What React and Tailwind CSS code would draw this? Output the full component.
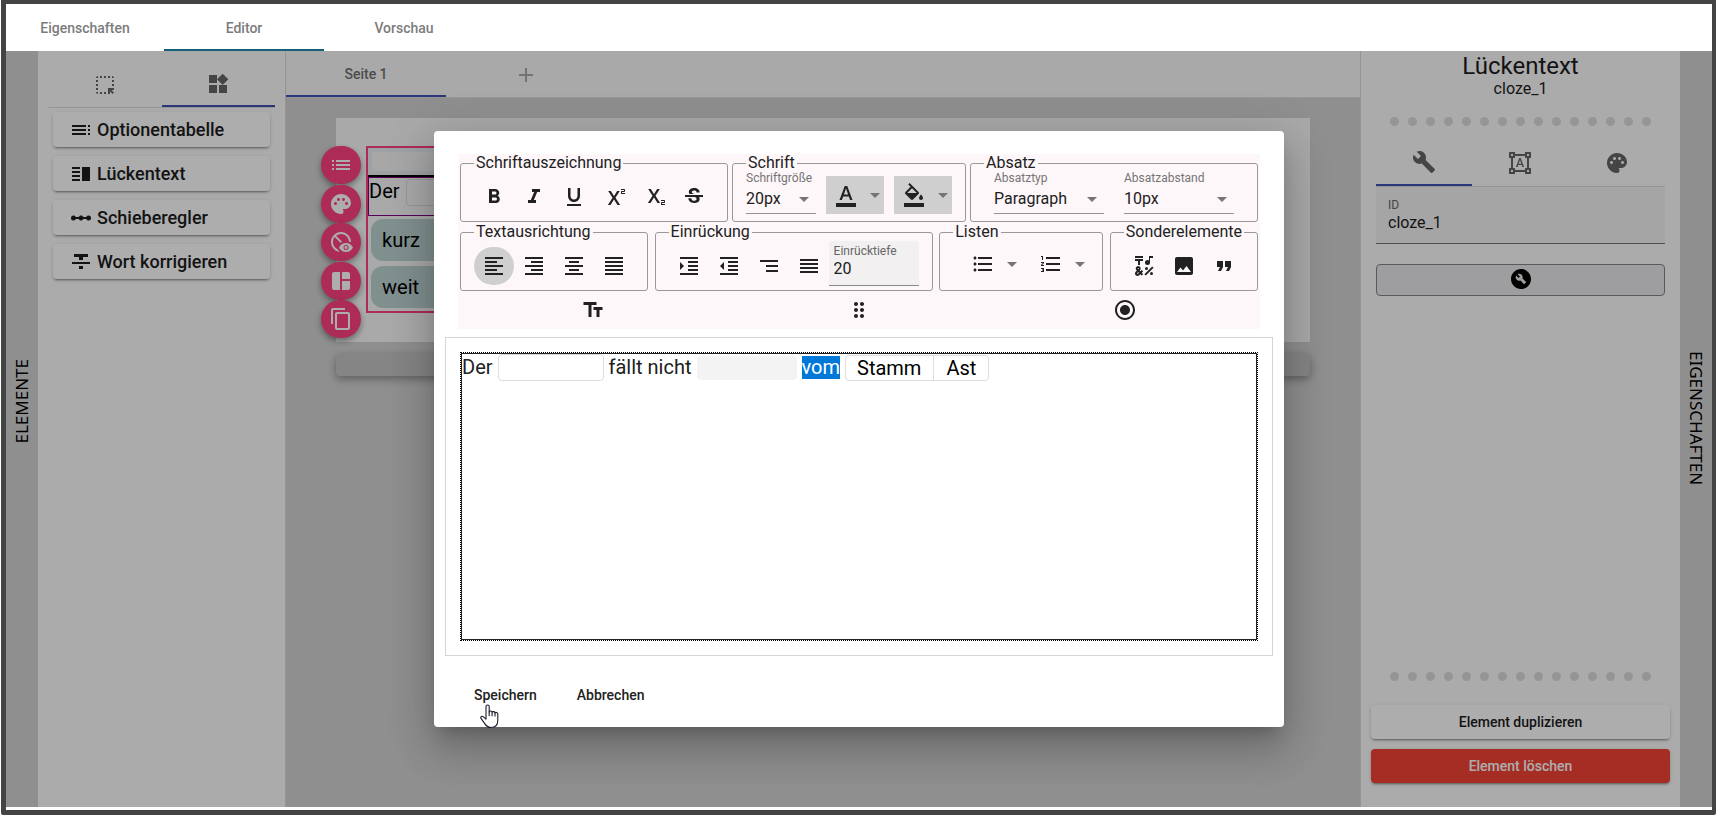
import React from 'react';
import {
  MdFormatBold, MdFormatItalic, MdFormatUnderlined, MdSuperscript, MdSubscript, MdStrikethroughS,
  MdFormatAlignLeft, MdFormatAlignRight, MdFormatAlignCenter, MdFormatAlignJustify,
  MdFormatIndentIncrease, MdFormatIndentDecrease, MdSegment, MdReorder,
  MdFormatListBulleted, MdFormatListNumbered, MdEmojiSymbols, MdImage, MdFormatQuote,
  MdTextFields, MdDragIndicator, MdRadioButtonChecked, MdPalette, MdBuild, MdFormatShapes,
  MdBuildCircle, MdWidgets, MdHighlightAlt, MdToc, MdVerticalSplit, MdLinearScale,
  MdFormatStrikethrough, MdContentCopy, MdList, MdDisabledVisible,
  MdFormatColorText, MdFormatColorFill, MdAdd, MdArrowDropDown,
} from 'react-icons/md';

const raised =
  'shadow-[0_3px_1px_-2px_rgba(0,0,0,0.2),0_2px_2px_0_rgba(0,0,0,0.14),0_1px_5px_0_rgba(0,0,0,0.12)]';

function LayoutIcon({ size }) {
  return (
    <svg viewBox="0 0 24 24" width={size} height={size} fill="currentColor">
      <path d="M11 21H5c-1.100 0-2-.9-2-2V5c0-1.100.9-2 2-2h6v18zM13 21h6c1.100 0 2-.9 2-2v-7h-8v9zM21 10V5c0-1.100-.9-2-2-2h-6v7h8z" />
    </svg>
  );
}

function Header() {
  const tabs = ['Eigenschaften', 'Editor', 'Vorschau'];
  return (
    <nav className="flex h-[47px] shrink-0 bg-white">
      {tabs.map((t) => (
        <button
          key={t}
          className={
            'flex w-40 items-center justify-center border-b-2 pt-[3px] text-sm font-medium text-[#7c7c7c] first:w-[158px] ' +
            (t === 'Editor' ? 'border-[#14607a]' : 'border-transparent')
          }
        >
          {t}
        </button>
      ))}
    </nav>
  );
}

function SideLabel({ children, flip }) {
  return (
    <div className="flex w-8 shrink-0 justify-center bg-[#d3d3d3] pt-[300px] font-['Noto_Sans',sans-serif] text-[17px] leading-6 text-black">
      <span className={'h-fit [writing-mode:vertical-rl] ' + (flip ? 'mt-2 rotate-180' : '')}>{children}</span>
    </div>
  );
}

function ElementPalette() {
  const items = [
    [MdToc, 'Optionentabelle'],
    [MdVerticalSplit, 'Lückentext'],
    [MdLinearScale, 'Schieberegler'],
    [MdFormatStrikethrough, 'Wort korrigieren'],
  ];
  return (
    <aside className="w-[248px] shrink-0 border-r border-[#dcdcdc] bg-[#fdfdfd] px-[10px] pt-[9px]">
      <div className="flex h-12 border-b border-[#dcdcdc] text-[#666]">
        <button aria-label="Auswahl" className="flex flex-1 items-center justify-center pt-[2px]">
          <MdHighlightAlt size={24} />
        </button>
        <button
          aria-label="Elemente"
          className="flex flex-1 items-center justify-center border-b-2 border-[#3f51b5] pt-[2px]"
        >
          <MdWidgets size={24} />
        </button>
      </div>
      <div className="flex flex-col gap-[9px] px-[5px] pt-1">
        {items.map(([Icon, label]) => (
          <button
            key={label}
            className={'flex h-[35px] items-center gap-1 rounded bg-white px-4 text-lg font-medium text-[#1c1c1c] ' + raised}
          >
            <Icon size={24} />
            {label}
          </button>
        ))}
      </div>
    </aside>
  );
}

function Canvas() {
  const tools = [MdList, MdPalette, MdDisabledVisible, LayoutIcon, MdContentCopy];
  const names = ['Liste', 'Farben', 'Sichtbarkeit', 'Layout', 'Kopieren'];
  return (
    <main className="flex min-w-0 flex-1 flex-col bg-[#d3d3d3]">
      <div className="flex h-[47px] shrink-0 border-b border-[#ddd] bg-[#fafafa] text-sm font-medium text-[#707070]">
        <button className="flex w-40 items-center justify-center border-b-2 border-[#3f51b5] pt-[2px]">Seite 1</button>
        <button aria-label="Seite hinzufügen" className="flex w-40 items-center justify-center pt-[2px] text-[#aaa]">
          <MdAdd size={24} />
        </button>
      </div>
      <div className="mx-[50px] mt-5">
        <section className="relative h-56 bg-[#fafafa] pt-7 pl-[30px]">
          <div className="absolute top-7 -left-[15px] flex h-48 flex-col justify-between">
            {tools.map((Icon, i) => (
              <button
                key={names[i]}
                aria-label={names[i]}
                className="flex h-[38px] w-10 items-center justify-center rounded-full bg-[#ff4081] text-white shadow-[0_3px_6px_rgba(0,0,0,0.4)]"
              >
                <Icon size={24} />
              </button>
            ))}
          </div>
          <div className="flex h-[167px] w-80 flex-col border-2 border-[#ff4081] text-xl text-black">
            <div className="h-[29px] border-b-2 border-black bg-[#e9eff4] px-1 py-1">
              <div className="h-full bg-[#f6f6f6]" />
            </div>
            <div className="flex h-[40px] gap-[6px] border border-[#800080] pt-[1px]">
              <span className="leading-6">Der</span>
              <input aria-label="Lücke 1" readOnly className="h-[27px] w-[106px] rounded border border-[#ddd]" />
            </div>
            <div className="flex flex-col gap-[5px] p-[3px]">
              <div className="flex h-[42px] items-center rounded-xl bg-[#bdd4d3] px-[11px]">kurz</div>
              <div className="flex h-[42px] items-center rounded-xl bg-[#bdd4d3] px-[11px]">weit</div>
            </div>
          </div>
        </section>
        <div className="mt-3 h-[22px] rounded bg-[#c4c4c4] shadow-[0_3px_8px_rgba(0,0,0,0.35)]" />
      </div>
    </main>
  );
}

function Dots() {
  return (
    <div className="flex justify-center gap-[9px]">
      {Array.from({ length: 15 }, (_, i) => (
        <span key={i} className="size-[9px] rounded-full bg-[#dcdcdc]" />
      ))}
    </div>
  );
}

function Properties() {
  return (
    <aside className="flex w-80 shrink-0 flex-col border-l border-[#dcdcdc] bg-[#fdfdfd] px-[10px] pb-6 text-[#1c1c1c]">
      <h2 className="pt-[2px] text-center text-2xl leading-[26px]">Lückentext</h2>
      <p className="mb-[18px] text-center text-base leading-5">cloze_1</p>
      <Dots />
      <div className="mt-[13px] flex flex-1 flex-col px-[5px]">
        <div className="flex h-12 border-b border-[#dcdcdc] text-[#666]">
          <button aria-label="Eigenschaften" className="flex flex-1 items-center justify-center border-b-2 border-[#3f51b5]">
            <MdBuild size={24} />
          </button>
          <button aria-label="Position" className="flex flex-1 items-center justify-center">
            <MdFormatShapes size={24} />
          </button>
          <button aria-label="Stil" className="flex flex-1 items-center justify-center">
            <MdPalette size={24} />
          </button>
        </div>
        <div className="flex h-[57px] flex-col justify-center border-b border-[#77777c] bg-[#f4f4f4] px-3">
          <label htmlFor="element-id" className="text-xs leading-4 text-[#666]">ID</label>
          <input id="element-id" defaultValue="cloze_1" className="w-full bg-transparent text-base leading-5" />
        </div>
        <button
          aria-label="Element bearbeiten"
          className="mt-5 flex h-8 items-center justify-center rounded border border-[#83838e] bg-[#e9e9ed] pb-[2px] text-black"
        >
          <MdBuildCircle size={24} />
        </button>
      </div>
      <Dots />
      <div className="mt-6 flex flex-col gap-[10px]">
        <button className={'h-[34px] rounded bg-white text-sm font-medium ' + raised}>Element duplizieren</button>
        <button className={'h-[34px] rounded bg-[#f44336] text-sm font-medium text-white ' + raised}>Element löschen</button>
      </div>
    </aside>
  );
}

function Group({ title, children, wide }) {
  return (
    <fieldset
      className={
        'h-[68px] min-w-0 rounded-[3px] border border-[#999] ' + (wide ? 'px-[23px]' : 'px-[13px]')
      }
    >
      <legend className={'px-[2px] text-base leading-[18px] ' + (wide ? '-ml-[10px]' : '')}>{title}</legend>
      <div className="flex h-[49px] items-center">{children}</div>
    </fieldset>
  );
}

function IconButton({ icon: Icon, label, active }) {
  return (
    <button
      aria-label={label}
      className={'flex h-[38px] w-10 items-center justify-center rounded-full ' + (active ? 'bg-[#cfcfcf]' : '')}
    >
      <Icon size={24} />
    </button>
  );
}

function Choice({ id, label, value, width }) {
  return (
    <div className={'relative h-[42px] self-start border-b border-[#949494] ' + width}>
      <label htmlFor={id} className="block text-xs leading-3 text-[#757575]">{label}</label>
      <select id={id} defaultValue={value} className="mt-[5px] block w-full appearance-none bg-transparent text-base leading-5">
        <option>{value}</option>
      </select>
      <MdArrowDropDown size={24} className="pointer-events-none absolute right-0 bottom-[2px] text-[#757575]" />
    </div>
  );
}

function ColourButton({ icon: Icon, label }) {
  return (
    <button aria-label={label} className="flex h-[38px] w-[58px] items-center bg-[#cfcfcf] pl-2">
      <Icon size={24} className="shrink-0" />
      <MdArrowDropDown size={24} className="ml-[5px] shrink-0 text-[#757575]" />
    </button>
  );
}

function ListButton({ icon: Icon, label }) {
  return (
    <button aria-label={label} className="flex h-[46px] w-[68px] items-center self-start pl-[18px]">
      <Icon size={24} className="shrink-0" />
      <MdArrowDropDown size={24} className="ml-[5px] shrink-0 text-[#757575]" />
    </button>
  );
}

function Toolbar() {
  return (
    <div className="h-[175px] bg-[#fdf7fa] px-[2px]">
      <div className="flex justify-between">
        <Group title="Schriftauszeichnung">
          <IconButton icon={MdFormatBold} label="Fett" />
          <IconButton icon={MdFormatItalic} label="Kursiv" />
          <IconButton icon={MdFormatUnderlined} label="Unterstrichen" />
          <IconButton icon={MdSuperscript} label="Hochgestellt" />
          <IconButton icon={MdSubscript} label="Tiefgestellt" />
          <IconButton icon={MdStrikethroughS} label="Durchgestrichen" />
        </Group>
        <Group title="Schrift">
          <div className="flex h-[46px] items-center gap-[10px] self-start">
            <Choice id="size" label="Schriftgröße" value="20px" width="w-[70px]" />
            <ColourButton icon={MdFormatColorText} label="Schriftfarbe" />
            <ColourButton icon={MdFormatColorFill} label="Hintergrundfarbe" />
          </div>
        </Group>
        <Group title="Absatz" wide>
          <div className="flex gap-5 self-start">
            <Choice id="kind" label="Absatztyp" value="Paragraph" width="w-[110px]" />
            <Choice id="spacing" label="Absatzabstand" value="10px" width="w-[110px]" />
          </div>
        </Group>
      </div>
      <div className="mt-[1px] flex justify-between">
        <Group title="Textausrichtung">
          <IconButton icon={MdFormatAlignLeft} label="Linksbündig" active />
          <IconButton icon={MdFormatAlignRight} label="Rechtsbündig" />
          <IconButton icon={MdFormatAlignCenter} label="Zentriert" />
          <IconButton icon={MdFormatAlignJustify} label="Blocksatz" />
        </Group>
        <Group title="Einrückung">
          <IconButton icon={MdFormatIndentIncrease} label="Einrücken" />
          <IconButton icon={MdFormatIndentDecrease} label="Ausrücken" />
          <IconButton icon={MdSegment} label="Hängend" />
          <IconButton icon={MdReorder} label="Zurücksetzen" />
          <div className="h-[45px] w-[90px] self-start rounded-t border-b border-[#8a8a8a] bg-[#f2f0f0] px-[5px] pt-[2px]">
            <label htmlFor="indent" className="block text-xs leading-4 text-[#666]">Einrücktiefe</label>
            <input id="indent" defaultValue="20" className="block w-full bg-transparent text-base leading-5" />
          </div>
        </Group>
        <Group title="Listen">
          <ListButton icon={MdFormatListBulleted} label="Aufzählung" />
          <ListButton icon={MdFormatListNumbered} label="Nummerierung" />
        </Group>
        <Group title="Sonderelemente">
          <IconButton icon={MdEmojiSymbols} label="Sonderzeichen" />
          <IconButton icon={MdImage} label="Bild" />
          <IconButton icon={MdFormatQuote} label="Zitat" />
        </Group>
      </div>
      <div className="flex h-[38px] items-center justify-around">
        <IconButton icon={MdTextFields} label="Eingabefeld" />
        <IconButton icon={MdDragIndicator} label="Ablagefeld" />
        <IconButton icon={MdRadioButtonChecked} label="Optionsfeld" />
      </div>
    </div>
  );
}

function HandCursor() {
  return (
    <svg viewBox="0 0 19 25" className="pointer-events-none absolute top-[27px] left-[22px] h-[25px] w-[19px]">
      <path
        d="M6 14V2.600C6 .4 9.200.4 9.200 2.600V8c.4-1.400 2.800-1.200 2.900.3.600-1.200 2.700-.8 2.900.6.700-.9 2.800-.5 2.800 1.300v6c0 4.500-2.400 7.300-6.800 7.300-3.500 0-5-1.700-6.600-4.400L1 14.400c-.9-1.900 1.100-2.800 2.400-1.600L6 15.200z"
        fill="#fff"
        stroke="#1c1c2a"
        strokeWidth="1.100"
        strokeLinejoin="round"
      />
      <path d="M9.200 7.500v4.500M12.100 8.200v4M15 9v3.500" fill="none" stroke="#1c1c2a" strokeWidth="1.100" />
    </svg>
  );
}

function Dialog() {
  return (
    <div
      role="dialog"
      aria-label="Text bearbeiten"
      className="w-[850px] rounded bg-white px-6 pt-[23px] pb-[14px] text-[#212121] shadow-[0_11px_15px_-7px_rgba(0,0,0,0.2),0_24px_38px_3px_rgba(0,0,0,0.14),0_9px_46px_8px_rgba(0,0,0,0.12)]"
    >
      <Toolbar />
      <div className="-mx-[13px] mt-2 h-[319px] border border-[#d5d5d5] p-[14px]">
        <div className="flex h-full items-start border border-dotted border-black text-xl leading-[25px] shadow-[inset_0_0_0_1px_#222]">
          <div className="flex items-center px-[1px] pt-[1px]">
            <span>Der</span>
            <input aria-label="Lücke 1" className="mx-[5px] h-[27px] w-[106px] rounded border border-[#ddd]" />
            <span>fällt nicht</span>
            <span className="mx-[5px] h-6 w-[100px] rounded bg-[#f3f3f3]" />
            <span className="bg-[#0078d7] leading-[23px] text-white">vom</span>
            <span className="ml-[5px] flex rounded border border-[#ddd] leading-6 text-black">
              <span className="border-r border-[#ddd] pr-3 pl-[11px]">Stamm</span>
              <span className="px-3">Ast</span>
            </span>
          </div>
        </div>
      </div>
      <div className="mt-[21px] flex gap-2">
        <button className="relative h-9 px-4 text-sm font-medium">
          Speichern
          <HandCursor />
        </button>
        <button className="h-9 px-4 text-sm font-medium">Abbrechen</button>
      </div>
    </div>
  );
}

export default function App() {
  return (
    <div className="h-screen bg-white pl-[1px] font-['Roboto',sans-serif]">
      <div className="flex h-full flex-col rounded-b-[2px] border-t-4 border-r-4 border-b-[5px] border-l-[5px] border-[#444]">
        <Header />
        <div className="relative mb-[3px] flex min-h-0 flex-1">
          <SideLabel flip>ELEMENTE</SideLabel>
          <ElementPalette />
          <Canvas />
          <Properties />
          <SideLabel>EIGENSCHAFTEN</SideLabel>
          <div className="absolute inset-0 flex items-center justify-center overflow-hidden bg-black/32">
            <Dialog />
          </div>
        </div>
      </div>
    </div>
  );
}
